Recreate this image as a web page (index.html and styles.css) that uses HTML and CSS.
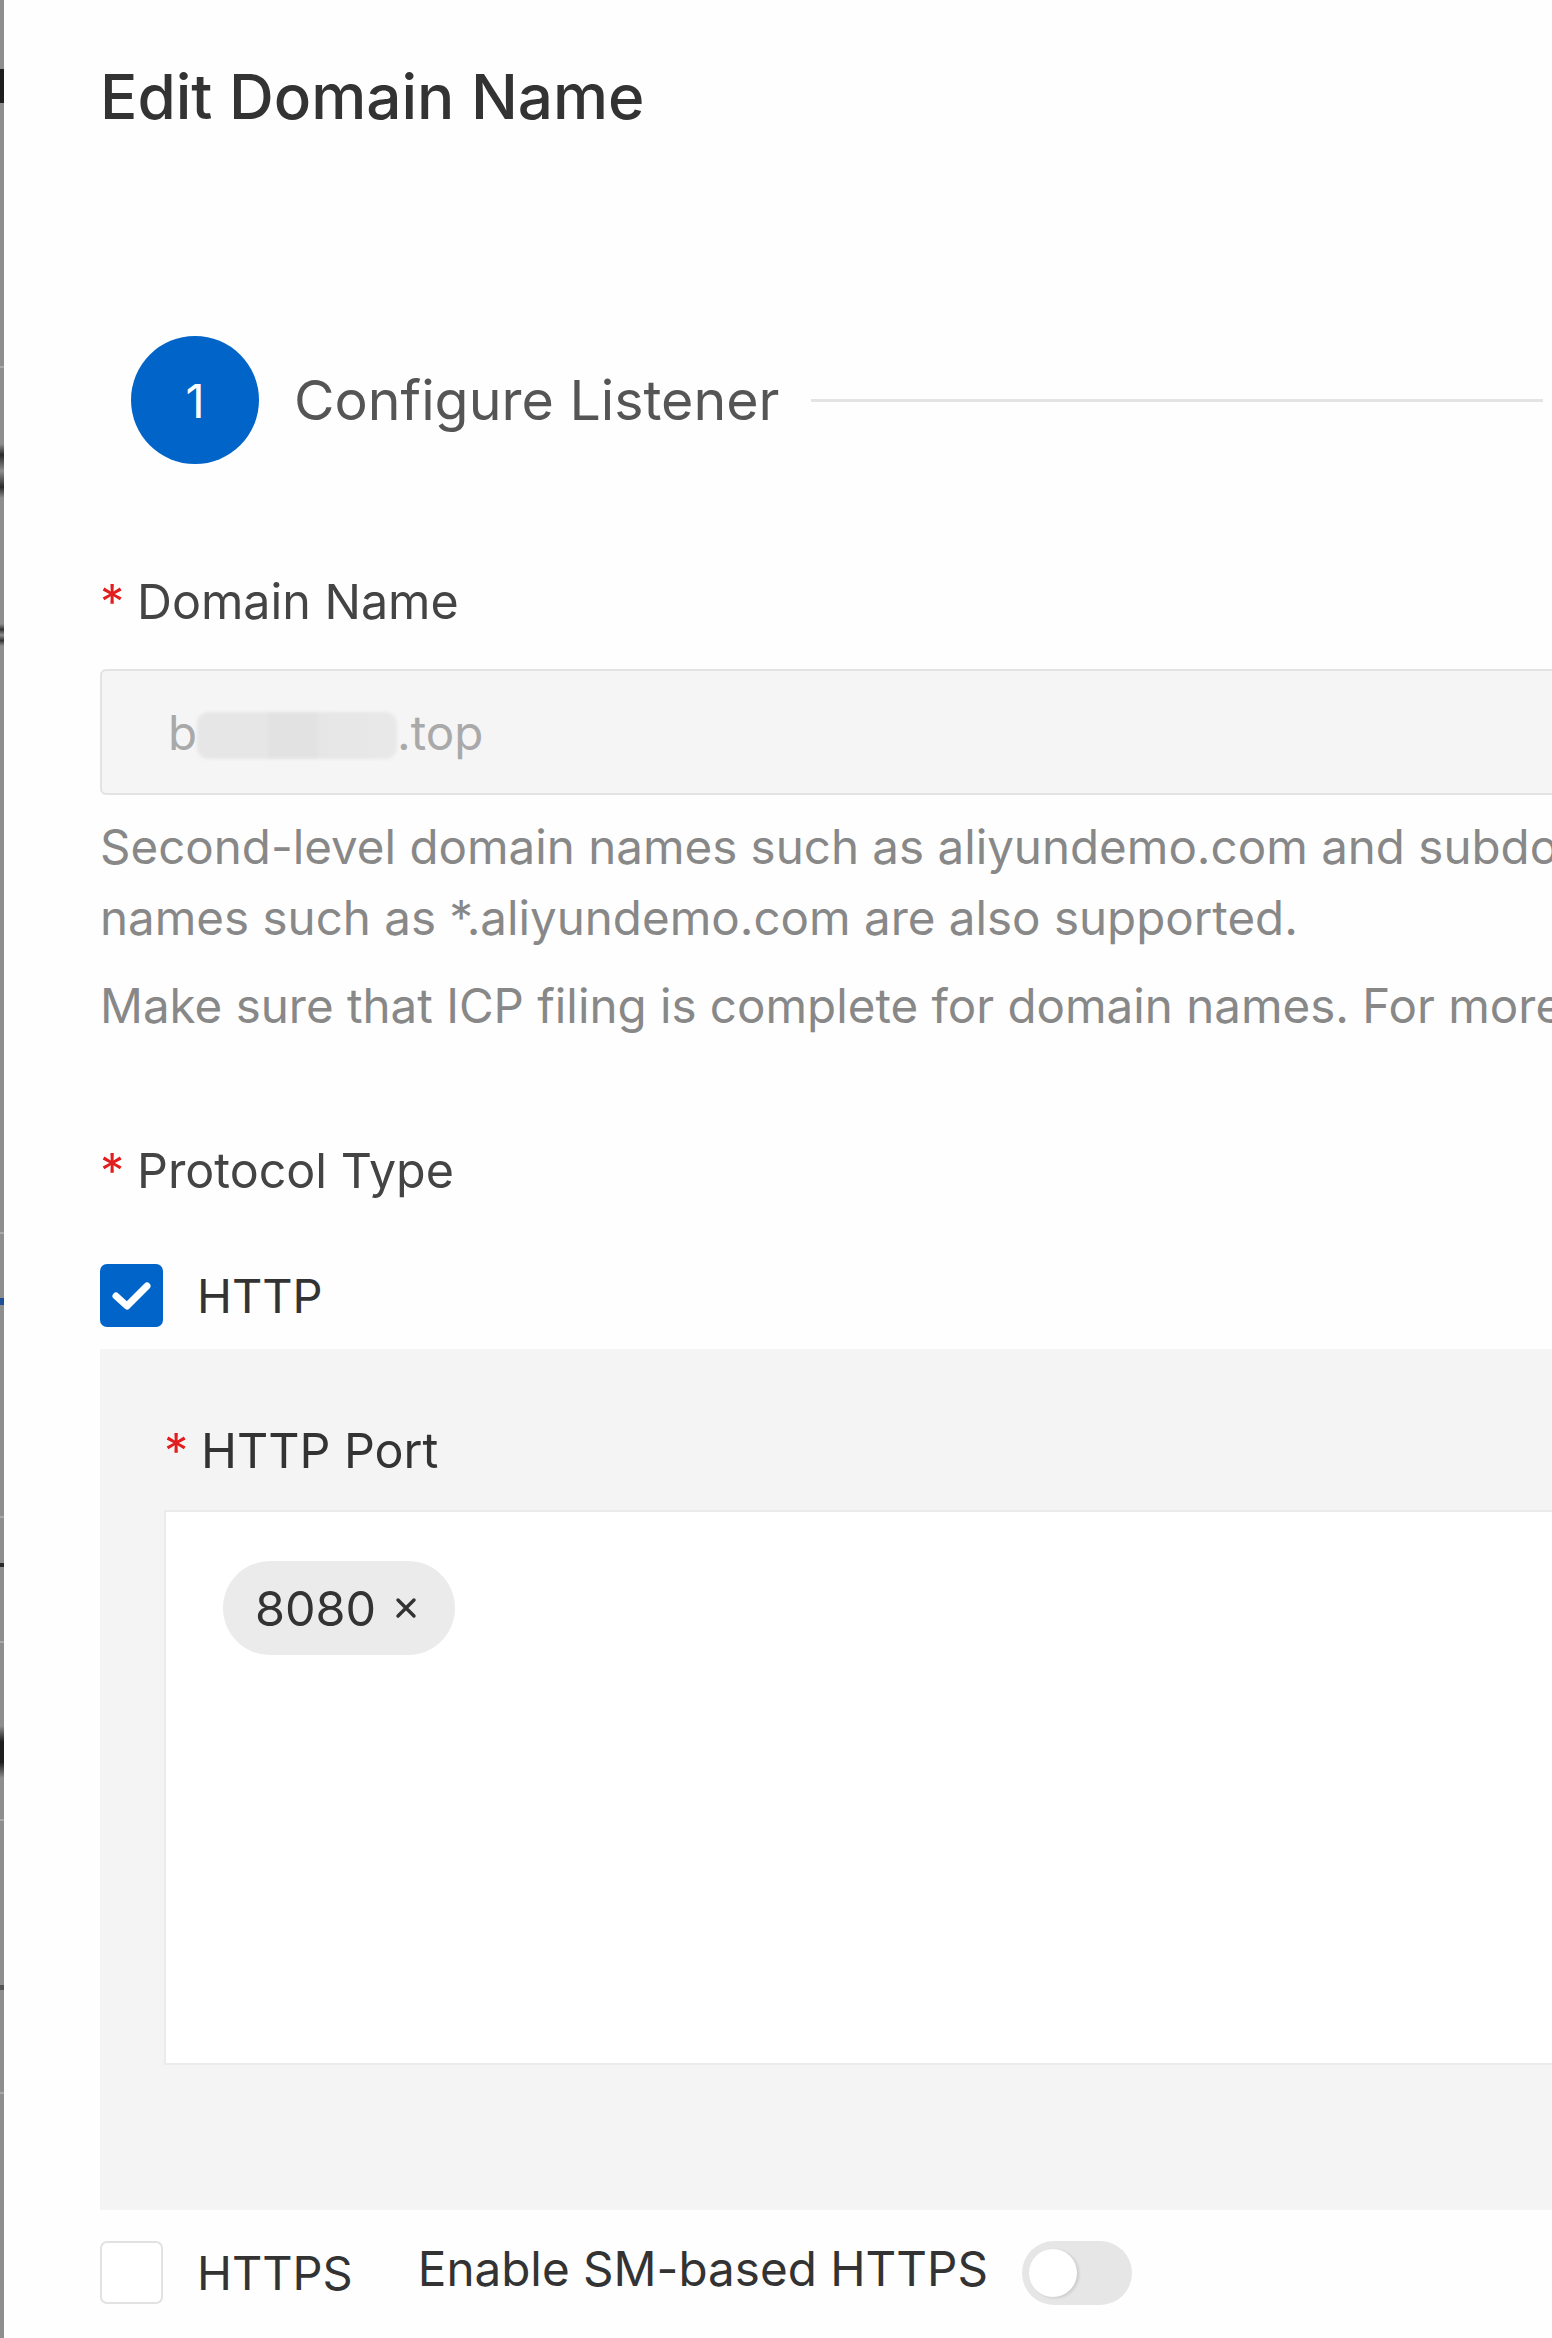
FILE: index.html
```html
<!DOCTYPE html>
<html lang="en">
<head>
<meta charset="utf-8">
<title>Edit Domain Name</title>
<link rel="stylesheet" href="styles.css">
</head>
<body>
<div class="screen">
  <div class="edge">
    <span class="mark mark-bar"></span>
    <span class="mark mark-line m1"></span>
    <span class="mark mark-lt"></span>
    <span class="mark mark-eq"></span>
    <span class="mark mark-line m2"></span>
    <span class="mark mark-blue"></span>
    <span class="mark mark-line m3"></span>
    <span class="mark mark-dash"></span>
    <span class="mark mark-line m4"></span>
    <span class="mark mark-big"></span>
    <span class="mark mark-line m5"></span>
    <span class="mark mark-dot"></span>
    <span class="mark mark-line m6"></span>
  </div>
  <main class="drawer">
    <h1 class="title">Edit Domain Name</h1>

    <div class="steps">
      <div class="step-num">1</div>
      <div class="step-title">Configure Listener</div>
      <div class="step-line"></div>
    </div>

    <div class="label label-domain"><span class="req">*</span>Domain Name</div>
    <div class="input">b<span class="redact"></span>.top</div>
    <p class="help">Second-level domain names such as aliyundemo.com and subdomain<br>names such as *.aliyundemo.com are also supported.</p>
    <p class="help help-icp">Make sure that ICP filing is complete for domain names. For more information, see ICP filing.</p>

    <div class="label label-protocol"><span class="req">*</span>Protocol Type</div>
    <div class="check-row check-row-http">
      <span class="checkbox checked">
        <svg viewBox="0 0 63 63" width="63" height="63" aria-hidden="true"><polyline points="16,32 27,42 47,22" fill="none" stroke="#ffffff" stroke-width="7" stroke-linecap="round" stroke-linejoin="round"/></svg>
      </span>
      <span class="check-text">HTTP</span>
    </div>

    <section class="panel">
      <div class="label label-port"><span class="req">*</span>HTTP Port</div>
      <div class="tag-box">
        <span class="tag">8080<svg class="tag-x" viewBox="0 0 22 22" width="22" height="22" aria-hidden="true"><path d="M3 3 L19 19 M19 3 L3 19" stroke="#333333" stroke-width="3.4" stroke-linecap="round"/></svg></span>
      </div>
    </section>

    <div class="check-row check-row-https">
      <span class="checkbox"></span>
      <span class="check-text">HTTPS</span>
      <span class="sm-text">Enable SM-based HTTPS</span>
      <span class="switch"><span class="knob"></span></span>
    </div>
  </main>
</div>
</body>
</html>
```

FILE: styles.css
```css
html, body {
  margin: 0;
  padding: 0;
  background: #fefefe;
}

body {
  font-family: "Inter", "Liberation Sans", "Noto Sans", sans-serif;
  color: #333333;
}

.screen {
  display: flex;
  width: 1552px;
  height: 2338px;
  overflow: hidden;
}

/* background page peeking at the left */
.edge {
  position: relative;
  flex: 0 0 4px;
  background: #8e8e8e;
}

.mark {
  position: absolute;
  left: 0;
  width: 4px;
}

.mark-bar { top: 69px; height: 34px; background: #1e1e1e; }
.mark-lt { top: 444px; height: 54px; background: linear-gradient(#8e8e8e 0, #2a2a2a 20%, #8e8e8e 50%, #2a2a2a 80%, #8e8e8e 100%); }
.mark-eq { top: 624px; height: 22px; background: linear-gradient(#8e8e8e 0, #333 25%, #8e8e8e 50%, #333 75%, #8e8e8e 100%); }
.mark-blue { top: 1298px; height: 7px; background: #1c4f96; }
.mark-dash { top: 1563px; height: 4px; background: #2a2a2a; }
.mark-big { top: 1726px; height: 52px; background: linear-gradient(#8e8e8e 0, #1e1e1e 30%, #1e1e1e 70%, #8e8e8e 100%); }
.mark-dot { top: 1985px; height: 5px; background: #555555; }
.mark-line { height: 2px; background: #a9a9a9; }
.m1 { top: 366px; }
.m2 { top: 1232px; }
.m3 { top: 1516px; }
.m4 { top: 1641px; }
.m5 { top: 1819px; }
.m6 { top: 2092px; }

.drawer {
  flex: 1 1 auto;
  min-width: 0;
  padding-left: 96px;
  background: #fefefe;
  overflow: hidden;
}

.title {
  margin: 62px 0 0;
  font-size: 62px;
  line-height: 70px;
  font-weight: 500;
  color: #333333;
  white-space: nowrap;
}

/* steps */
.steps {
  display: flex;
  align-items: center;
  height: 128px;
  margin: 204px 9px 0 31px;
}

.step-num {
  flex: 0 0 128px;
  height: 128px;
  border-radius: 50%;
  background: #0064c8;
  color: #ffffff;
  font-size: 47px;
  line-height: 1;
  display: flex;
  align-items: center;
  justify-content: center;
}

.step-title {
  margin-left: 35px;
  font-size: 55.5px;
  line-height: 1;
  color: #555555;
  white-space: nowrap;
}

.step-line {
  flex: 1 1 auto;
  height: 3px;
  margin-left: 31px;
  background: #e4e4e4;
}

/* labels */
.label {
  font-size: 48.4px;
  line-height: 60px;
  color: #444444;
  white-space: nowrap;
}

.req {
  display: inline-block;
  width: 37px;
  color: #e21d1d;
}

.label-domain { margin-top: 108px; }
.label-protocol { margin-top: 100px; }

/* disabled input */
.input {
  box-sizing: border-box;
  display: flex;
  align-items: center;
  width: 1600px;
  height: 126px;
  margin-top: 37px;
  padding-left: 66px;
  border: 2px solid #e3e3e3;
  border-radius: 6px;
  background: #f5f5f5;
  font-size: 47.5px;
  color: #a9a9a9;
  white-space: nowrap;
}

.redact {
  display: inline-block;
  width: 200px;
  height: 47px;
  margin-top: 6px;
  border-radius: 12px;
  background: linear-gradient(90deg, #e6e6e6 0, #e6e6e6 35%, #e2e2e2 36%, #e2e2e2 60%, #e6e6e6 61%, #e8e8e8 100%);
  filter: blur(1.5px);
}

/* help */
.help {
  margin: 16px 0 0;
  font-size: 47.5px;
  line-height: 71px;
  color: #888888;
  white-space: nowrap;
}

.help-icp { margin-top: 17px; }

/* checkboxes */
.check-row {
  display: flex;
  align-items: center;
  height: 63px;
  white-space: nowrap;
}

.check-row-http { margin-top: 63px; }
.check-row-https { margin-top: 31px; }

.checkbox {
  box-sizing: border-box;
  flex: 0 0 63px;
  height: 63px;
  border: 2px solid #e2e2e2;
  border-radius: 7px;
  background: #ffffff;
}

.checkbox.checked {
  border: none;
  background: #0064c8;
}

.checkbox svg { display: block; }

.check-text {
  margin-left: 34px;
  font-size: 47px;
  color: #333333;
}

.sm-text {
  margin-left: 65px;
  margin-bottom: 8px;
  font-size: 47.6px;
  color: #333333;
}

.switch {
  box-sizing: border-box;
  display: flex;
  align-items: center;
  flex: 0 0 110px;
  height: 64px;
  margin-left: 34px;
  padding-left: 7px;
  border-radius: 32px;
  background: #e6e6e6;
}

.knob {
  width: 48px;
  height: 48px;
  border-radius: 50%;
  background: #ffffff;
  box-shadow: 2px 1px 3px rgba(0, 0, 0, 0.12);
}

/* HTTP panel */
.panel {
  box-sizing: border-box;
  width: 1600px;
  height: 861px;
  margin-top: 22px;
  padding: 72px 0 0 64px;
  background: #f4f4f4;
}

.label-port { color: #333333; }

.tag-box {
  box-sizing: border-box;
  height: 555px;
  margin-top: 29px;
  padding: 49px 0 0 57px;
  border: 2px solid #ebebeb;
  background: #ffffff;
}

.tag {
  box-sizing: border-box;
  display: inline-flex;
  align-items: center;
  height: 94px;
  padding: 0 38px 0 32px;
  border-radius: 47px;
  background: #ebebeb;
  font-size: 48.5px;
  color: #333333;
}

.tag-x {
  display: block;
  margin-left: 19px;
  width: 22px;
  height: 22px;
}
```
